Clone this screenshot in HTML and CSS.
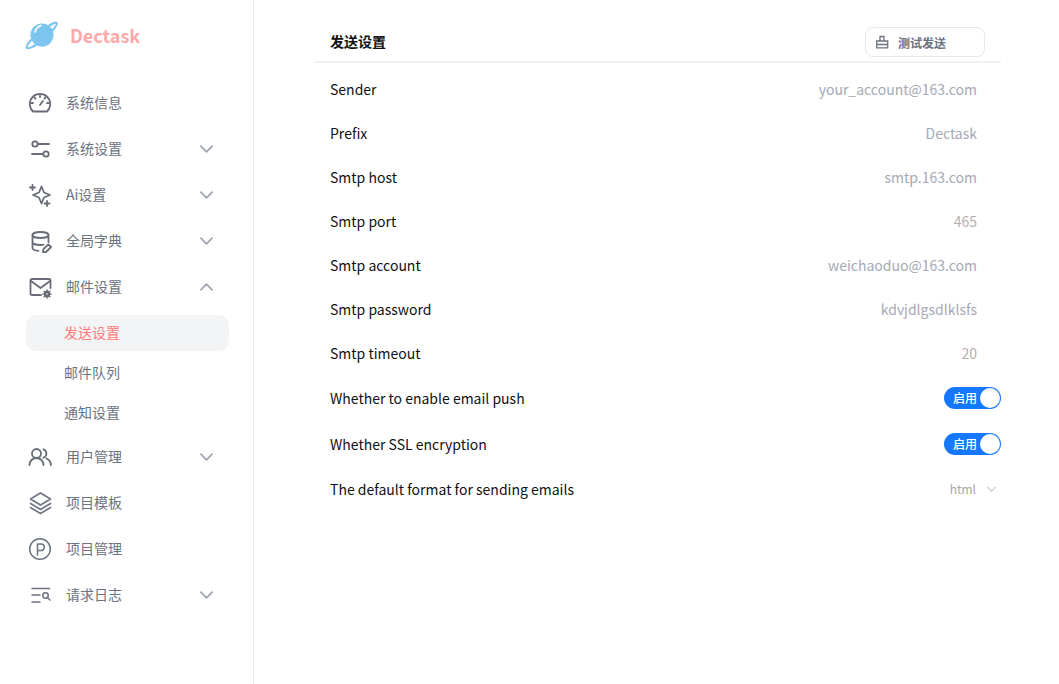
FILE: index.html
```html
<!DOCTYPE html>
<html lang="zh">
<head>
<meta charset="utf-8">
<title>Dectask</title>
<link rel="stylesheet" href="styles.css">
</head>
<body>
<div class="app">
  <aside class="sidebar">
    <div class="logo">
      <svg class="planet" width="34" height="34" viewBox="0 0 34 34">
        <circle cx="17" cy="17" r="11.5" fill="#7cc5ee"/>
        <path d="M10 14c1-3.500 3-5.500 6-6.500" fill="none" stroke="#fff" stroke-width="1.600" stroke-linecap="round"/>
        <path d="M24.500 7.500c3-2 6-3.500 7-2.500 1.500 1.500-4.500 9-12 15.500S3.500 31.500 2 30c-1-1 1-4.500 4-8" fill="none" stroke="#7cc5ee" stroke-width="2.200" stroke-linecap="round"/>
      </svg>
      <span class="brand">Dectask</span>
    </div>
    <nav class="menu">
      <div class="item">
        <svg class="ico" viewBox="0 0 24 24"><path d="M5 20.500a10.200 10.200 0 1 1 14 0z"/><path d="M12 14l3-4M12 4.500v1.500M5 12H3.500M20.500 12H19M6.500 6.500l1 1M17.500 6.500l-1 1"/></svg>
        <span class="label">系统信息</span>
      </div>
      <div class="item">
        <svg class="ico" viewBox="0 0 24 24"><circle cx="7" cy="7" r="2.700"/><path d="M9.700 7H21M4 17h11.300"/><circle cx="18" cy="17" r="2.700"/></svg>
        <span class="label">系统设置</span>
        <svg class="chev" viewBox="0 0 14 8"><path d="M1 1l6 6 6-6"/></svg>
      </div>
      <div class="item">
        <svg class="ico" viewBox="0 0 24 24"><path d="M13.500 3.500l2.500 6 6 2.500-6 2.500-2.500 6-2.500-6-6-2.500 6-2.500z"/><path d="M4.500 2v5M2 4.500h5M19 18v5M16.500 20.500h5"/></svg>
        <span class="label">Ai设置</span>
        <svg class="chev" viewBox="0 0 14 8"><path d="M1 1l6 6 6-6"/></svg>
      </div>
      <div class="item">
        <svg class="ico" viewBox="0 0 24 24"><ellipse cx="12.500" cy="6" rx="8" ry="3"/><path d="M4.500 6v13c0 1.500 2 2.500 6 2.800M20.500 6v7M4.500 13c0 1.700 3.500 3 8 3 1.500 0 2-.1 3-.3"/><path d="M18 23l-3 .3.300-3 5-5 2.700 2.700z"/></svg>
        <span class="label">全局字典</span>
        <svg class="chev" viewBox="0 0 14 8"><path d="M1 1l6 6 6-6"/></svg>
      </div>
      <div class="item">
        <svg class="ico" viewBox="0 0 24 24"><path d="M13 20H4a1.500 1.500 0 0 1-1.500-1.500v-13A1.500 1.500 0 0 1 4 4h17a1.500 1.500 0 0 1 1.500 1.500V13"/><path d="M3 6l9.500 7L22 6"/><circle cx="19" cy="19" r="2" stroke-width="2.400"/><path d="M19 15v1M19 22v1M15 19h1M22 19h1M16.200 16.200l.7.700M21.100 21.100l.7.700M16.200 21.800l.7-.7M21.100 16.900l.7-.7" stroke-width="1.500"/></svg>
        <span class="label">邮件设置</span>
        <svg class="chev" viewBox="0 0 14 8"><path d="M1 7l6-6 6 6"/></svg>
      </div>
      <div class="subs">
        <div class="sub active">发送设置</div>
        <div class="sub">邮件队列</div>
        <div class="sub">通知设置</div>
      </div>
      <div class="item">
        <svg class="ico" viewBox="0 0 24 24"><circle cx="8.500" cy="8.500" r="4.500"/><path d="M1.500 20c0-4 3-7 7-7s7 3 7 7M15.500 4.300a4.500 4.500 0 0 1 0 8.400M18.500 13.500c2.500 1 4.300 3.300 4.300 6.500"/></svg>
        <span class="label">用户管理</span>
        <svg class="chev" viewBox="0 0 14 8"><path d="M1 1l6 6 6-6"/></svg>
      </div>
      <div class="item">
        <svg class="ico thin" viewBox="0 0 24 24"><path d="M12.500 2l10 6-10 6-10-6z"/><path d="M2.500 12.500l10 6 10-6M2.500 16.500l10 6 10-6"/></svg>
        <span class="label">项目模板</span>
      </div>
      <div class="item">
        <svg class="ico thin" viewBox="0 0 24 24"><circle cx="12" cy="12" r="10.300"/><path d="M9.500 18V7h3.500a3.300 3.300 0 0 1 0 6.600H9.500"/></svg>
        <span class="label">项目管理</span>
      </div>
      <div class="item">
        <svg class="ico thin" viewBox="0 0 24 24"><path d="M4 5.500h17.500M4 12h8M4 19h8"/><circle cx="17.500" cy="12.500" r="2.700"/><path d="M19.500 14.500l2.500 2.500"/></svg>
        <span class="label">请求日志</span>
        <svg class="chev" viewBox="0 0 14 8"><path d="M1 1l6 6 6-6"/></svg>
      </div>
    </nav>
  </aside>
  <main class="main">
    <section class="panel">
      <header class="head">
        <h1 class="title">发送设置</h1>
        <button class="test" type="button">
          <svg class="brush" viewBox="0 0 14 14"><path d="M.700 6h11v6.800h-11zM.700 9.500h11M4 6V1.500h4V6"/></svg>
          <span>测试发送</span>
        </button>
      </header>
      <div class="row"><span>Sender</span><span class="val">your_account@163.com</span></div>
      <div class="row"><span>Prefix</span><span class="val">Dectask</span></div>
      <div class="row"><span>Smtp host</span><span class="val">smtp.163.com</span></div>
      <div class="row"><span>Smtp port</span><span class="val num">465</span></div>
      <div class="row"><span>Smtp account</span><span class="val">weichaoduo@163.com</span></div>
      <div class="row"><span>Smtp password</span><span class="val">kdvjdlgsdlklsfs</span></div>
      <div class="row"><span>Smtp timeout</span><span class="val num">20</span></div>
      <div class="row tall"><span>Whether to enable email push</span><span class="switch"><span>启用</span><i class="knob"></i></span></div>
      <div class="row tall"><span>Whether SSL encryption</span><span class="switch"><span>启用</span><i class="knob"></i></span></div>
      <div class="row"><span>The default format for sending emails</span>
        <span class="select"><span>html</span><svg class="sel-chev" viewBox="0 0 12 7"><path d="M1 1l5 5 5-5"/></svg></span>
      </div>
    </section>
  </main>
</div>
</body>
</html>
```

FILE: styles.css
```css
* { box-sizing: border-box; }
html, body { margin: 0; height: 100%; }
body {
  background: #fff;
  color: #111;
  font-family: "Noto Sans CJK SC", "Noto Sans", sans-serif;
  font-size: 14px;
  overflow: hidden;
}
.app { display: flex; height: 684px; }
.sidebar {
  width: 254px;
  flex: none;
  border-right: 1px solid #e9e9ec;
  padding: 16px 24px 0 26px;
}
.logo { display: flex; align-items: center; height: 38px; margin-bottom: 26px; }
.planet { flex: none; margin-right: 11px; margin-left: -1px; }
.brand { font-size: 18px; font-weight: 700; color: #ffa8a8; line-height: 38px; }
.menu { display: flex; flex-direction: column; }
.item {
  display: flex;
  align-items: center;
  height: 46px;
  color: #6b7280;
}
.ico {
  width: 24px;
  height: 24px;
  flex: none;
  margin: 0 14px 0 2px;
  fill: none;
  stroke: #676c76;
  stroke-width: 1.800;
  stroke-linecap: round;
  stroke-linejoin: round;
}
.ico.thin { stroke-width: 1.500; stroke: #6b7280; }
.label { flex: 1; line-height: 20px; padding-bottom: 2px; }
.chev {
  width: 13px;
  height: 8px;
  flex: none;
  margin-right: 16px;
  fill: none;
  stroke: #9ca3af;
  stroke-width: 1.800;
  stroke-linecap: round;
  stroke-linejoin: round;
}
.subs { padding-top: 5px; margin-bottom: 1px; }
.sub {
  height: 40px;
  line-height: 38px;
  padding-left: 38px;
  color: #6b7280;
}
.sub.active {
  height: 36px;
  line-height: 34px;
  margin-bottom: 2px;
  background: #f3f4f6;
  border-radius: 10px;
  color: #ff7a7a;
}
.main { flex: 1; padding: 0 58px 0 60px; }
.panel { width: 687px; }
.head {
  display: flex;
  align-items: center;
  justify-content: space-between;
  height: 63px;
  margin-bottom: 4px;
  padding: 23px 16px 0;
  border-bottom: 2px solid #f1f1f3;
}
.title { margin: 0 0 2px; font-size: 14px; font-weight: 700; color: #111; line-height: 34px; }
.test {
  display: flex;
  align-items: center;
  width: 120px;
  height: 30px;
  padding: 0 0 0 10px;
  background: #fff;
  border: 1px solid #e5e7eb;
  border-radius: 8px;
  font: 700 12px "Noto Sans CJK SC", sans-serif;
  color: #6b7280;
}
.brush {
  width: 14px;
  height: 14px;
  margin-right: 8px;
  fill: none;
  stroke: #6b7280;
  stroke-width: 1.300;
}
.row {
  display: flex;
  align-items: center;
  justify-content: space-between;
  height: 44px;
  padding: 0 24px 0 16px;
  line-height: 20px;
}
.row.tall { height: 46px; padding-right: 0; }
.val { color: #a4a9b6; }
.val.num { color: #b9aeae; }
.switch {
  display: flex;
  align-items: center;
  justify-content: space-between;
  width: 57px;
  height: 22px;
  padding: 0 1px 0 9px;
  border-radius: 11px;
  background: #1677ff;
  color: #fff;
  font-size: 12px;
  font-weight: 500;
}
.knob { width: 20px; height: 20px; border-radius: 50%; background: #fff; }
.select { display: flex; align-items: center; color: #a8a6a4; font-size: 12px; margin-right: -20px; }
.sel-chev {
  width: 11px;
  height: 6px;
  margin-left: 10px;
  fill: none;
  stroke: #c9ccd3;
  stroke-width: 1.500;
}
```
